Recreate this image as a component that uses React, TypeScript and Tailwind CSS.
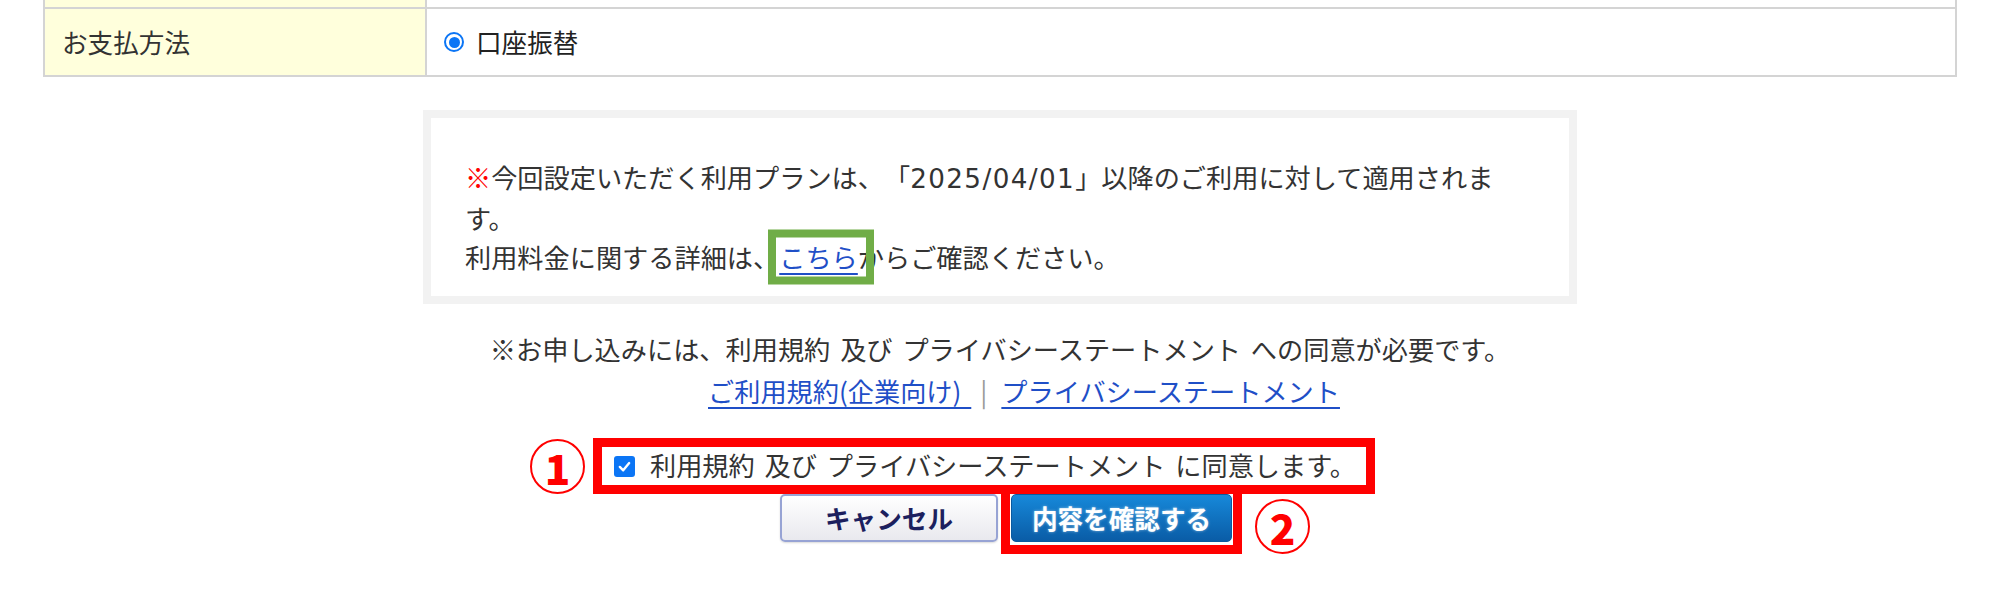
import React from 'react';

function Radio() {
  return (
    <span className="flex h-[20px] w-[20px] items-center justify-center rounded-full border-2 border-[#0b75f5] bg-white">
      <span className="h-[11px] w-[11px] rounded-full bg-[#0b75f5]" />
    </span>
  );
}

function CheckBox() {
  return (
    <span className="flex h-[21px] w-[21px] shrink-0 items-center justify-center rounded-[3px] bg-[#0b75f5]">
      <svg viewBox="0 0 20 20" className="h-[17px] w-[17px]">
        <polyline points="4.5,10.5 8.5,14.5 15.5,6" fill="none" stroke="white" strokeWidth="2.8" strokeLinecap="round" strokeLinejoin="round" />
      </svg>
    </span>
  );
}

function Marker({ n }: { n: string }) {
  return (
    <span className="flex h-[55px] w-[55px] items-center justify-center rounded-full border-[2.5px] border-[#ff0000] text-[42px] font-black leading-none text-[#ff0000]">
      {n}
    </span>
  );
}

export default function App() {
  return (
    <div className="min-h-[607px] w-full bg-white font-['Noto_Sans_CJK_JP','Noto_Sans',sans-serif] text-[25.6px] text-[#333] [text-spacing-trim:space-all]">
      {/* payment table */}
      <div className="mx-[43px] border-x-2 border-b-2 border-[#d4d4d4]">
        <div className="grid h-[7px] grid-cols-[382px_1fr]">
          <div className="border-r-2 border-[#d4d4d4] bg-[#ffffdc]" />
          <div />
        </div>
        <div className="grid h-[68px] grid-cols-[382px_1fr] border-t-2 border-[#d4d4d4]">
          <div className="flex items-center border-r-2 border-[#d4d4d4] bg-[#ffffdc] pl-[17px]">お支払方法</div>
          <div className="flex items-center gap-[12px] pl-[17px] text-[#222]">
            <Radio />
            <span>口座振替</span>
          </div>
        </div>
      </div>

      <div className="text-[26.2px]">
        {/* notice */}
        <div className="mx-auto mt-[33px] w-[1154px] border-[8px] border-[#f2f2f2] pb-[19px] pl-[34px] pr-[64px] pt-[40px] leading-[39px]">
          <p>
            <span className="text-[#ff0000]">※</span>今回設定いただく利用プランは、「<span className="font-['DejaVu_Sans'] tracking-[1.4px]">2025/04/01</span>」以降のご利用に対して適用されます。
          </p>
          <p>
            利用料金に関する詳細は、
            <span className="relative">
              <a href="#" className="text-[#1f4fc7] underline underline-offset-[5px]">こちら</a>
              <span className="pointer-events-none absolute left-[-11px] top-1/2 h-[55px] w-[106px] -translate-y-1/2 border-[8px] border-[#70ad47]" />
            </span>
            からご確認ください。
          </p>
        </div>

        {/* terms */}
        <div className="mt-[24px] text-center leading-[42px] [word-spacing:4px]">
          <p>※お申し込みには、利用規約 及び プライバシーステートメント への同意が必要です。</p>
          <p className="pl-[48px]">
            <a href="#" className="text-[#1f4fc7] underline underline-offset-[5px]">ご利用規約(企業向け)&nbsp;</a>
            <span className="pl-[9px] pr-[14px] text-[#999]">|</span>
            <a href="#" className="text-[#1f4fc7] underline underline-offset-[5px]">プライバシーステートメント</a>
          </p>
        </div>

        {/* agree */}
        <div className="mt-[26px] flex justify-center">
          <div className="relative mr-[32px]">
            <div className="absolute left-[-63px] top-[1px]">
              <Marker n="1" />
            </div>
            <label className="flex h-[56px] items-center gap-[15px] border-[9px] border-[#ff0000] bg-white pl-[12px] pr-[10px] [word-spacing:4px]">
              <CheckBox />
              <span>利用規約 及び プライバシーステートメント に同意します。</span>
            </label>
          </div>
        </div>
      </div>

      {/* buttons */}
      <div className="flex justify-center gap-[13px] pl-[12px]">
        <button className="h-[48px] w-[218px] rounded-[5px] border-2 border-[#97a3d4] bg-gradient-to-b from-white to-[#e9e9ee] text-[25.6px] font-bold text-[#1c1f5e] shadow-[0_1px_2px_rgba(0,0,0,0.15)]">
          キャンセル
        </button>
        <div className="relative">
          <button className="h-[48px] w-[221px] rounded-[5px] border border-[#0a5aa0] bg-gradient-to-b from-[#1789da] to-[#0a5ca6] text-[25.6px] font-bold text-white [text-shadow:0_0_3px_rgba(255,255,255,0.5)]">
            内容を確認する
          </button>
          <span className="pointer-events-none absolute -bottom-[12px] -left-[10px] -right-[10px] -top-[9px] border-[9px] border-[#ff0000]" />
          <div className="absolute left-[calc(100%+23px)] top-[5px]">
            <Marker n="2" />
          </div>
        </div>
      </div>
    </div>
  );
}
